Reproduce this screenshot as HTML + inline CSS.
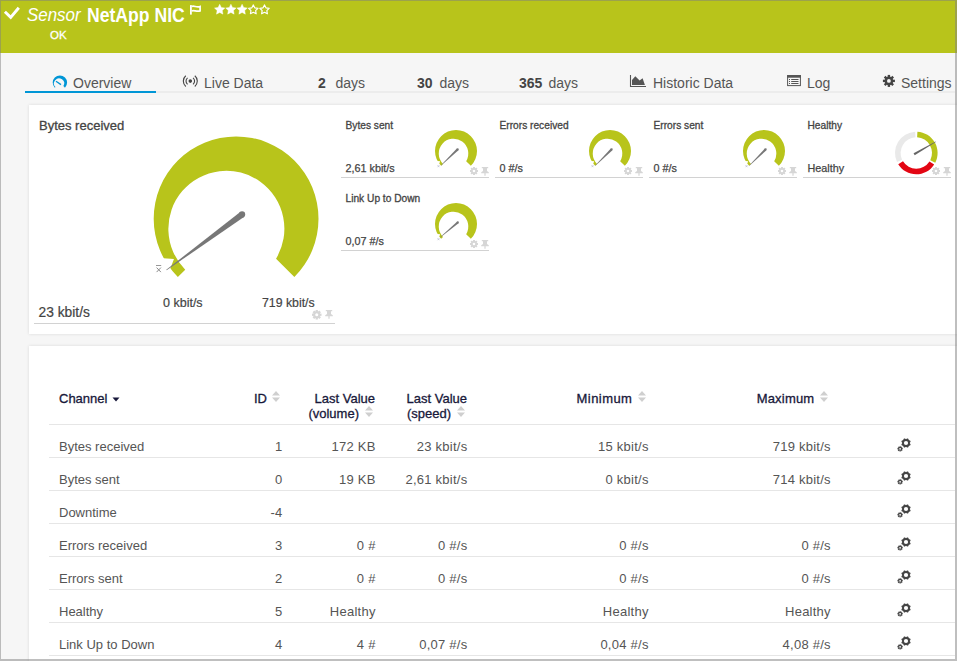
<!DOCTYPE html>
<html><head><meta charset="utf-8">
<style>
*{box-sizing:border-box}
html,body{margin:0;padding:0}
body{width:957px;height:661px;overflow:hidden;position:relative;background:#f6f6f6;font-family:"Liberation Sans",sans-serif;color:#555}
.a{position:absolute;white-space:nowrap}
svg.a{overflow:visible}
#hdr{position:absolute;left:0;top:0;width:957px;height:53px;background:#b8c41b}
.frame{position:absolute;background:rgba(128,128,128,0.5)}
.tab{position:absolute;top:75px;font-size:14px;color:#555;line-height:17px;white-space:nowrap}
.tab b{color:#444}
.panel{position:absolute;background:#fff;box-shadow:0 0 3px rgba(0,0,0,0.12)}
.ttl{position:absolute;font-size:10.2px;color:#444;-webkit-text-stroke:0.3px #444;line-height:12px;white-space:nowrap}
.val{position:absolute;font-size:10.8px;color:#444;-webkit-text-stroke:0.25px #444;line-height:12px;white-space:nowrap}
.uline{position:absolute;height:1px;background:#d2d2d2}
.th{position:absolute;font-size:13px;color:#18183a;-webkit-text-stroke:0.3px #18183a;line-height:15px;white-space:nowrap}
.td{position:absolute;font-size:13px;color:#555;line-height:15px;white-space:nowrap}
.r{text-align:right}
.rl{position:absolute;left:49px;width:906px;height:1px;background:#e6e6e6}
</style></head>
<body>
<div id="hdr"></div>
<svg class="a" style="left:0;top:0" width="24" height="24" viewBox="0 0 24 24"><path d="M4.9 11.8L10.7 17.4L18.8 7.7" fill="none" stroke="#fff" stroke-width="2.9"/></svg>
<div class="a" style="left:27px;top:4px;font-size:18px;font-style:italic;color:#fff;line-height:22px;transform:scaleX(0.94);transform-origin:0 0">Sensor</div>
<div class="a" style="left:87px;top:2.5px;font-size:19.8px;font-weight:bold;color:#fff;line-height:24px;transform:scaleX(0.89);transform-origin:0 0">NetApp NIC</div>
<div class="a" style="left:50px;top:28px;font-size:11.5px;color:#fff;-webkit-text-stroke:0.3px #fff;line-height:15px">OK</div>
<svg class="a" style="left:0;top:0" width="300" height="30" viewBox="0 0 300 30"><rect x="190" y="5.1" width="1.8" height="9.5" fill="#fff"/><path d="M191.6 6.5C194 5.3 196.5 7.7 200.1 6.5V10.9C196.5 12.1 194 9.7 191.6 10.9" fill="none" stroke="#fff" stroke-width="1.7"/><path d="M219.70 4.20L218.08 7.48L214.47 8.00L217.08 10.55L216.47 14.15L219.70 12.45L222.93 14.15L222.32 10.55L224.93 8.00L221.32 7.48Z" fill="#fff" stroke="#fff" stroke-width="0.4" stroke-linejoin="round"/><path d="M230.90 4.20L229.28 7.48L225.67 8.00L228.28 10.55L227.67 14.15L230.90 12.45L234.13 14.15L233.52 10.55L236.13 8.00L232.52 7.48Z" fill="#fff" stroke="#fff" stroke-width="0.4" stroke-linejoin="round"/><path d="M242.10 4.20L240.48 7.48L236.87 8.00L239.48 10.55L238.87 14.15L242.10 12.45L245.33 14.15L244.72 10.55L247.33 8.00L243.72 7.48Z" fill="#fff" stroke="#fff" stroke-width="0.4" stroke-linejoin="round"/><path d="M253.30 4.90L251.86 7.82L248.64 8.29L250.97 10.56L250.42 13.76L253.30 12.25L256.18 13.76L255.63 10.56L257.96 8.29L254.74 7.82Z" fill="none" stroke="#fff" stroke-width="1.2" stroke-linejoin="round"/><path d="M264.50 4.90L263.06 7.82L259.84 8.29L262.17 10.56L261.62 13.76L264.50 12.25L267.38 13.76L266.83 10.56L269.16 8.29L265.94 7.82Z" fill="none" stroke="#fff" stroke-width="1.2" stroke-linejoin="round"/></svg>
<svg class="a" style="left:0;top:60px" width="957" height="40" viewBox="0 60 957 40"><g transform="translate(59.9 82.6) scale(0.072)"><path d="M-70.71 70.71A100 100 0 1 1 70.71 70.71L48.47 48.47A70.4 70.4 0 1 0 -61.73 61.73Z" fill="#0096d6"/></g><path d="M56 81.2L61 84.6" stroke="#0096d6" stroke-width="1.3"/><circle cx="190.3" cy="81.1" r="1.8" fill="#444"/><path d="M187.54 77.81A4.3 4.3 0 0 0 187.54 84.39" fill="none" stroke="#444" stroke-width="1.1"/><path d="M193.06 77.81A4.3 4.3 0 0 1 193.06 84.39" fill="none" stroke="#444" stroke-width="1.1"/><path d="M185.80 75.74A7.0 7.0 0 0 0 185.80 86.46" fill="none" stroke="#444" stroke-width="1.1"/><path d="M194.80 75.74A7.0 7.0 0 0 1 194.80 86.46" fill="none" stroke="#444" stroke-width="1.1"/><path d="M630.5 75V86.5H646" fill="none" stroke="#555" stroke-width="1.1"/><path d="M632 85V80L635.3 76.2L639.6 80.6L642.6 78.2L644.9 85Z" fill="#555"/><rect x="787.6" y="75.6" width="12.8" height="10" fill="none" stroke="#555" stroke-width="1"/><rect x="787.1" y="75.1" width="13.8" height="2.6" fill="#555"/><rect x="789" y="79.0" width="1" height="1" fill="#555"/><rect x="791.2" y="79.0" width="7.3" height="1" fill="#555"/><rect x="789" y="81.0" width="1" height="1" fill="#555"/><rect x="791.2" y="81.0" width="7.3" height="1" fill="#555"/><rect x="789" y="83.0" width="1" height="1" fill="#555"/><rect x="791.2" y="83.0" width="7.3" height="1" fill="#555"/><g transform="translate(888.9 80.9)"><rect x="-1.2" y="-6" width="2.4" height="3" transform="rotate(0)" fill="#444"/><rect x="-1.2" y="-6" width="2.4" height="3" transform="rotate(45)" fill="#444"/><rect x="-1.2" y="-6" width="2.4" height="3" transform="rotate(90)" fill="#444"/><rect x="-1.2" y="-6" width="2.4" height="3" transform="rotate(135)" fill="#444"/><rect x="-1.2" y="-6" width="2.4" height="3" transform="rotate(180)" fill="#444"/><rect x="-1.2" y="-6" width="2.4" height="3" transform="rotate(225)" fill="#444"/><rect x="-1.2" y="-6" width="2.4" height="3" transform="rotate(270)" fill="#444"/><rect x="-1.2" y="-6" width="2.4" height="3" transform="rotate(315)" fill="#444"/><circle r="4.3" fill="#444"/><circle r="1.9" fill="#f6f6f6"/></g></svg>
<div class="uline" style="left:25px;top:91px;width:930px;height:2px;background:#ececec"></div>
<div class="uline" style="left:25px;top:91px;width:131px;height:2px;background:#0096d6"></div>
<div class="tab" style="left:73px">Overview</div>
<div class="tab" style="left:204px">Live Data</div>
<div class="tab" style="left:318px"><b>2</b></div>
<div class="tab" style="left:335.5px">days</div>
<div class="tab" style="left:417px"><b>30</b></div>
<div class="tab" style="left:439.5px">days</div>
<div class="tab" style="left:519px"><b>365</b></div>
<div class="tab" style="left:548.5px">days</div>
<div class="tab" style="left:653px">Historic Data</div>
<div class="tab" style="left:807px">Log</div>
<div class="tab" style="left:901px">Settings</div>
<div class="panel" style="left:29px;top:105px;width:940px;height:229px"></div>
<div class="panel" style="left:29px;top:346px;width:940px;height:330px"></div>
<div class="a" style="left:39px;top:118px;font-size:13px;-webkit-text-stroke:0.3px #444;color:#444;line-height:15px">Bytes received</div>
<svg class="a" style="left:140px;top:125px" width="200" height="170" viewBox="140 125 200 170"><g transform="translate(236.1 218.8) scale(0.8240)"><path d="M-70.71 70.71A100 100 0 1 1 70.71 70.71L48.47 48.47A70.4 70.4 0 1 0 -61.73 61.73Z" fill="#b8c41b"/><path d="M-88.2 47.9L-75.4 48.7L-79.8 60.2L-104 62L-104 45Z" fill="#fff"/><path d="M4.99 -8.40L-84.76 61.97L-84.35 62.54L9.50 -2.28Z" fill="#777"/><circle cx="7.25" cy="-5.34" r="3.8" fill="#777"/></g></svg>
<svg class="a" style="left:150px;top:260px" width="16" height="16" viewBox="150 260 16 16"><path d="M156 265.5H161.2" stroke="#8c8c8c" stroke-width="0.9"/><path d="M156.6 267.6L160.9 272.1M160.9 267.6L156.6 272.1" stroke="#8c8c8c" stroke-width="1"/></svg>
<div class="a" style="left:163px;top:296px;font-size:12.5px;color:#444;-webkit-text-stroke:0.2px #444;line-height:14px">0 kbit/s</div>
<div class="a" style="left:262px;top:296px;font-size:12.3px;color:#444;-webkit-text-stroke:0.2px #444;line-height:14px">719 kbit/s</div>
<div class="a" style="left:38.5px;top:305px;font-size:13.8px;color:#444;-webkit-text-stroke:0.2px #444;line-height:15px">23 kbit/s</div>
<div class="uline" style="left:34px;top:323px;width:301px"></div>
<svg class="a" style="left:312px;top:310px" width="9.5" height="9.5" viewBox="0 0 9.5 9.5"><rect x="3.61" y="0" width="2.28" height="2.85" transform="rotate(0 4.75 4.75)" fill="#d6d6d6"/><rect x="3.61" y="0" width="2.28" height="2.85" transform="rotate(45 4.75 4.75)" fill="#d6d6d6"/><rect x="3.61" y="0" width="2.28" height="2.85" transform="rotate(90 4.75 4.75)" fill="#d6d6d6"/><rect x="3.61" y="0" width="2.28" height="2.85" transform="rotate(135 4.75 4.75)" fill="#d6d6d6"/><rect x="3.61" y="0" width="2.28" height="2.85" transform="rotate(180 4.75 4.75)" fill="#d6d6d6"/><rect x="3.61" y="0" width="2.28" height="2.85" transform="rotate(225 4.75 4.75)" fill="#d6d6d6"/><rect x="3.61" y="0" width="2.28" height="2.85" transform="rotate(270 4.75 4.75)" fill="#d6d6d6"/><rect x="3.61" y="0" width="2.28" height="2.85" transform="rotate(315 4.75 4.75)" fill="#d6d6d6"/><circle cx="4.75" cy="4.75" r="3.42" fill="#d6d6d6"/><circle cx="4.75" cy="4.75" r="1.52" fill="#fff"/></svg><svg class="a" style="left:325px;top:309.5px" width="8" height="10" viewBox="0 0 8 10"><path d="M0.8 0H7.2V1.3H6V3.9L7.8 5.2V6.2H4.6V8.8H3.4V6.2H0.2V5.2L2 3.9V1.3H0.8Z" fill="#d6d6d6"/></svg>
<div class="ttl" style="left:345.5px;top:119.5px">Bytes sent</div><div class="val" style="left:345.5px;top:162px">2,61 kbit/s</div><div class="uline" style="left:341px;top:177px;width:148px"></div><svg class="a" style="left:426px;top:120px" width="60" height="60" viewBox="426 120 60 60"><g transform="translate(456 151) scale(0.2100)"><path d="M-70.71 70.71A100 100 0 1 1 70.71 70.71L48.47 48.47A70.4 70.4 0 1 0 -61.73 61.73Z" fill="#b8c41b"/><path d="M-88.2 47.9L-75.4 48.7L-79.8 60.2L-104 62L-104 45Z" fill="#fff"/><path d="M4.16 -11.53L-71.82 68.14L-70.57 69.43L11.66 -3.76Z" fill="#777"/><circle cx="7.91" cy="-7.64" r="5.4" fill="#777"/></g></svg><svg class="a" style="left:436px;top:163px" width="6" height="6" viewBox="0 0 6 6"><path d="M1.6 2.2L3.4 4.2M3.4 2.2L1.6 4.2" stroke="#b4b8d0" stroke-width="0.7"/></svg><svg class="a" style="left:470px;top:167px" width="8" height="8" viewBox="0 0 8 8"><rect x="3.04" y="0" width="1.92" height="2.40" transform="rotate(0 4.0 4.0)" fill="#d6d6d6"/><rect x="3.04" y="0" width="1.92" height="2.40" transform="rotate(45 4.0 4.0)" fill="#d6d6d6"/><rect x="3.04" y="0" width="1.92" height="2.40" transform="rotate(90 4.0 4.0)" fill="#d6d6d6"/><rect x="3.04" y="0" width="1.92" height="2.40" transform="rotate(135 4.0 4.0)" fill="#d6d6d6"/><rect x="3.04" y="0" width="1.92" height="2.40" transform="rotate(180 4.0 4.0)" fill="#d6d6d6"/><rect x="3.04" y="0" width="1.92" height="2.40" transform="rotate(225 4.0 4.0)" fill="#d6d6d6"/><rect x="3.04" y="0" width="1.92" height="2.40" transform="rotate(270 4.0 4.0)" fill="#d6d6d6"/><rect x="3.04" y="0" width="1.92" height="2.40" transform="rotate(315 4.0 4.0)" fill="#d6d6d6"/><circle cx="4.0" cy="4.0" r="2.88" fill="#d6d6d6"/><circle cx="4.0" cy="4.0" r="1.28" fill="#fff"/></svg><svg class="a" style="left:480.8px;top:167px" width="8" height="10" viewBox="0 0 8 10"><path d="M0.8 0H7.2V1.3H6V3.9L7.8 5.2V6.2H4.6V8.8H3.4V6.2H0.2V5.2L2 3.9V1.3H0.8Z" fill="#d6d6d6"/></svg>
<div class="ttl" style="left:499.5px;top:119.5px">Errors received</div><div class="val" style="left:499.5px;top:162px">0 #/s</div><div class="uline" style="left:495px;top:177px;width:148px"></div><svg class="a" style="left:580px;top:120px" width="60" height="60" viewBox="580 120 60 60"><g transform="translate(610 151) scale(0.2100)"><path d="M-70.71 70.71A100 100 0 1 1 70.71 70.71L48.47 48.47A70.4 70.4 0 1 0 -61.73 61.73Z" fill="#b8c41b"/><path d="M-88.2 47.9L-75.4 48.7L-79.8 60.2L-104 62L-104 45Z" fill="#fff"/><path d="M3.96 -11.60L-70.64 69.37L-69.37 70.64L11.60 -3.96Z" fill="#777"/><circle cx="7.78" cy="-7.78" r="5.4" fill="#777"/></g></svg><svg class="a" style="left:590px;top:163px" width="6" height="6" viewBox="0 0 6 6"><path d="M1.6 2.2L3.4 4.2M3.4 2.2L1.6 4.2" stroke="#b4b8d0" stroke-width="0.7"/></svg><svg class="a" style="left:624px;top:167px" width="8" height="8" viewBox="0 0 8 8"><rect x="3.04" y="0" width="1.92" height="2.40" transform="rotate(0 4.0 4.0)" fill="#d6d6d6"/><rect x="3.04" y="0" width="1.92" height="2.40" transform="rotate(45 4.0 4.0)" fill="#d6d6d6"/><rect x="3.04" y="0" width="1.92" height="2.40" transform="rotate(90 4.0 4.0)" fill="#d6d6d6"/><rect x="3.04" y="0" width="1.92" height="2.40" transform="rotate(135 4.0 4.0)" fill="#d6d6d6"/><rect x="3.04" y="0" width="1.92" height="2.40" transform="rotate(180 4.0 4.0)" fill="#d6d6d6"/><rect x="3.04" y="0" width="1.92" height="2.40" transform="rotate(225 4.0 4.0)" fill="#d6d6d6"/><rect x="3.04" y="0" width="1.92" height="2.40" transform="rotate(270 4.0 4.0)" fill="#d6d6d6"/><rect x="3.04" y="0" width="1.92" height="2.40" transform="rotate(315 4.0 4.0)" fill="#d6d6d6"/><circle cx="4.0" cy="4.0" r="2.88" fill="#d6d6d6"/><circle cx="4.0" cy="4.0" r="1.28" fill="#fff"/></svg><svg class="a" style="left:634.8px;top:167px" width="8" height="10" viewBox="0 0 8 10"><path d="M0.8 0H7.2V1.3H6V3.9L7.8 5.2V6.2H4.6V8.8H3.4V6.2H0.2V5.2L2 3.9V1.3H0.8Z" fill="#d6d6d6"/></svg>
<div class="ttl" style="left:653.5px;top:119.5px">Errors sent</div><div class="val" style="left:653.5px;top:162px">0 #/s</div><div class="uline" style="left:649px;top:177px;width:148px"></div><svg class="a" style="left:734px;top:120px" width="60" height="60" viewBox="734 120 60 60"><g transform="translate(764 151) scale(0.2100)"><path d="M-70.71 70.71A100 100 0 1 1 70.71 70.71L48.47 48.47A70.4 70.4 0 1 0 -61.73 61.73Z" fill="#b8c41b"/><path d="M-88.2 47.9L-75.4 48.7L-79.8 60.2L-104 62L-104 45Z" fill="#fff"/><path d="M3.96 -11.60L-70.64 69.37L-69.37 70.64L11.60 -3.96Z" fill="#777"/><circle cx="7.78" cy="-7.78" r="5.4" fill="#777"/></g></svg><svg class="a" style="left:744px;top:163px" width="6" height="6" viewBox="0 0 6 6"><path d="M1.6 2.2L3.4 4.2M3.4 2.2L1.6 4.2" stroke="#b4b8d0" stroke-width="0.7"/></svg><svg class="a" style="left:778px;top:167px" width="8" height="8" viewBox="0 0 8 8"><rect x="3.04" y="0" width="1.92" height="2.40" transform="rotate(0 4.0 4.0)" fill="#d6d6d6"/><rect x="3.04" y="0" width="1.92" height="2.40" transform="rotate(45 4.0 4.0)" fill="#d6d6d6"/><rect x="3.04" y="0" width="1.92" height="2.40" transform="rotate(90 4.0 4.0)" fill="#d6d6d6"/><rect x="3.04" y="0" width="1.92" height="2.40" transform="rotate(135 4.0 4.0)" fill="#d6d6d6"/><rect x="3.04" y="0" width="1.92" height="2.40" transform="rotate(180 4.0 4.0)" fill="#d6d6d6"/><rect x="3.04" y="0" width="1.92" height="2.40" transform="rotate(225 4.0 4.0)" fill="#d6d6d6"/><rect x="3.04" y="0" width="1.92" height="2.40" transform="rotate(270 4.0 4.0)" fill="#d6d6d6"/><rect x="3.04" y="0" width="1.92" height="2.40" transform="rotate(315 4.0 4.0)" fill="#d6d6d6"/><circle cx="4.0" cy="4.0" r="2.88" fill="#d6d6d6"/><circle cx="4.0" cy="4.0" r="1.28" fill="#fff"/></svg><svg class="a" style="left:788.8px;top:167px" width="8" height="10" viewBox="0 0 8 10"><path d="M0.8 0H7.2V1.3H6V3.9L7.8 5.2V6.2H4.6V8.8H3.4V6.2H0.2V5.2L2 3.9V1.3H0.8Z" fill="#d6d6d6"/></svg>
<div class="ttl" style="left:807.5px;top:119.5px">Healthy</div><div class="val" style="left:807.5px;top:162px">Healthy</div><div class="uline" style="left:803px;top:177px;width:148px"></div><svg class="a" style="left:893px;top:125px" width="58" height="60" viewBox="893 125 58 60"><g transform="translate(916.3 153)"><path d="M-19.30 9.00A21.3 21.3 0 0 1 -1.11 -21.27L-0.82 -15.68A15.7 15.7 0 0 0 -14.23 6.64Z" fill="#e9e9e9"/><path d="M1.11 -21.27A21.3 21.3 0 0 1 18.98 9.67L13.99 7.13A15.7 15.7 0 0 0 0.82 -15.68Z" fill="#b8c41b"/><path d="M17.86 11.60A21.3 21.3 0 0 1 -18.06 11.29L-13.31 8.32A15.7 15.7 0 0 0 13.17 8.55Z" fill="#e30613"/><path d="M-1.62 2.20L19.59 -11.08L19.39 -11.42L-2.72 0.30Z" fill="#666"/></g></svg><svg class="a" style="left:932px;top:167px" width="8" height="8" viewBox="0 0 8 8"><rect x="3.04" y="0" width="1.92" height="2.40" transform="rotate(0 4.0 4.0)" fill="#d6d6d6"/><rect x="3.04" y="0" width="1.92" height="2.40" transform="rotate(45 4.0 4.0)" fill="#d6d6d6"/><rect x="3.04" y="0" width="1.92" height="2.40" transform="rotate(90 4.0 4.0)" fill="#d6d6d6"/><rect x="3.04" y="0" width="1.92" height="2.40" transform="rotate(135 4.0 4.0)" fill="#d6d6d6"/><rect x="3.04" y="0" width="1.92" height="2.40" transform="rotate(180 4.0 4.0)" fill="#d6d6d6"/><rect x="3.04" y="0" width="1.92" height="2.40" transform="rotate(225 4.0 4.0)" fill="#d6d6d6"/><rect x="3.04" y="0" width="1.92" height="2.40" transform="rotate(270 4.0 4.0)" fill="#d6d6d6"/><rect x="3.04" y="0" width="1.92" height="2.40" transform="rotate(315 4.0 4.0)" fill="#d6d6d6"/><circle cx="4.0" cy="4.0" r="2.88" fill="#d6d6d6"/><circle cx="4.0" cy="4.0" r="1.28" fill="#fff"/></svg><svg class="a" style="left:942.8px;top:167px" width="8" height="10" viewBox="0 0 8 10"><path d="M0.8 0H7.2V1.3H6V3.9L7.8 5.2V6.2H4.6V8.8H3.4V6.2H0.2V5.2L2 3.9V1.3H0.8Z" fill="#d6d6d6"/></svg>
<div class="ttl" style="left:345.5px;top:192.5px">Link Up to Down</div><div class="val" style="left:345.5px;top:235px">0,07 #/s</div><div class="uline" style="left:341px;top:250px;width:148px"></div><svg class="a" style="left:426px;top:193px" width="60" height="60" viewBox="426 193 60 60"><g transform="translate(456 224) scale(0.2100)"><path d="M-70.71 70.71A100 100 0 1 1 70.71 70.71L48.47 48.47A70.4 70.4 0 1 0 -61.73 61.73Z" fill="#b8c41b"/><path d="M-88.2 47.9L-75.4 48.7L-79.8 60.2L-104 62L-104 45Z" fill="#fff"/><path d="M4.88 -11.24L-76.01 63.44L-74.85 64.81L11.88 -3.01Z" fill="#777"/><circle cx="8.38" cy="-7.12" r="5.4" fill="#777"/></g></svg><svg class="a" style="left:436px;top:236px" width="6" height="6" viewBox="0 0 6 6"><path d="M1.6 2.2L3.4 4.2M3.4 2.2L1.6 4.2" stroke="#b4b8d0" stroke-width="0.7"/></svg><svg class="a" style="left:470px;top:240px" width="8" height="8" viewBox="0 0 8 8"><rect x="3.04" y="0" width="1.92" height="2.40" transform="rotate(0 4.0 4.0)" fill="#d6d6d6"/><rect x="3.04" y="0" width="1.92" height="2.40" transform="rotate(45 4.0 4.0)" fill="#d6d6d6"/><rect x="3.04" y="0" width="1.92" height="2.40" transform="rotate(90 4.0 4.0)" fill="#d6d6d6"/><rect x="3.04" y="0" width="1.92" height="2.40" transform="rotate(135 4.0 4.0)" fill="#d6d6d6"/><rect x="3.04" y="0" width="1.92" height="2.40" transform="rotate(180 4.0 4.0)" fill="#d6d6d6"/><rect x="3.04" y="0" width="1.92" height="2.40" transform="rotate(225 4.0 4.0)" fill="#d6d6d6"/><rect x="3.04" y="0" width="1.92" height="2.40" transform="rotate(270 4.0 4.0)" fill="#d6d6d6"/><rect x="3.04" y="0" width="1.92" height="2.40" transform="rotate(315 4.0 4.0)" fill="#d6d6d6"/><circle cx="4.0" cy="4.0" r="2.88" fill="#d6d6d6"/><circle cx="4.0" cy="4.0" r="1.28" fill="#fff"/></svg><svg class="a" style="left:480.8px;top:240px" width="8" height="10" viewBox="0 0 8 10"><path d="M0.8 0H7.2V1.3H6V3.9L7.8 5.2V6.2H4.6V8.8H3.4V6.2H0.2V5.2L2 3.9V1.3H0.8Z" fill="#d6d6d6"/></svg>
<div class="th" style="left:59px;top:391px">Channel</div>
<svg class="a" style="left:112px;top:397px" width="8" height="5" viewBox="0 0 8 5"><path d="M0.5 0.5H7.5L4 4.5Z" fill="#18183a"/></svg>
<div class="th r" style="left:200px;width:67px;top:391px">ID</div>
<svg class="a" style="left:272px;top:391px" width="8" height="11" viewBox="0 0 8 11"><path d="M0 4.5L4 0L8 4.5Z M0 6.5L4 11L8 6.5Z" fill="#cfcfcf"/></svg>
<div class="th r" style="left:290px;width:85px;top:391px">Last Value</div>
<div class="th r" style="left:290px;width:69px;top:406px">(volume)</div>
<svg class="a" style="left:365px;top:406px" width="8" height="11" viewBox="0 0 8 11"><path d="M0 4.5L4 0L8 4.5Z M0 6.5L4 11L8 6.5Z" fill="#cfcfcf"/></svg>
<div class="th r" style="left:380px;width:87px;top:391px">Last Value</div>
<div class="th r" style="left:380px;width:71px;top:406px">(speed)</div>
<svg class="a" style="left:457px;top:406px" width="8" height="11" viewBox="0 0 8 11"><path d="M0 4.5L4 0L8 4.5Z M0 6.5L4 11L8 6.5Z" fill="#cfcfcf"/></svg>
<div class="th r" style="left:540px;width:92.4px;top:391px;letter-spacing:0.45px">Minimum</div>
<svg class="a" style="left:638px;top:391px" width="8" height="11" viewBox="0 0 8 11"><path d="M0 4.5L4 0L8 4.5Z M0 6.5L4 11L8 6.5Z" fill="#cfcfcf"/></svg>
<div class="th r" style="left:720px;width:94.4px;top:391px;letter-spacing:0.2px">Maximum</div>
<svg class="a" style="left:820px;top:391px" width="8" height="11" viewBox="0 0 8 11"><path d="M0 4.5L4 0L8 4.5Z M0 6.5L4 11L8 6.5Z" fill="#cfcfcf"/></svg>
<div class="rl" style="top:424px"></div>
<div class="rl" style="top:457px"></div>
<div class="rl" style="top:490px"></div>
<div class="rl" style="top:523px"></div>
<div class="rl" style="top:556px"></div>
<div class="rl" style="top:589px"></div>
<div class="rl" style="top:622px"></div>
<div class="rl" style="top:655px"></div>
<div class="td" style="left:59px;top:439px">Bytes received</div>
<div class="td r" style="left:162.45px;width:120px;top:439px;letter-spacing:0.25px">1</div>
<div class="td r" style="left:255.64999999999998px;width:120px;top:439px;letter-spacing:0.25px">172 KB</div>
<div class="td r" style="left:347.45px;width:120px;top:439px;letter-spacing:0.25px">23 kbit/s</div>
<div class="td r" style="left:528.65px;width:120px;top:439px;letter-spacing:0.25px">15 kbit/s</div>
<div class="td r" style="left:710.85px;width:120px;top:439px;letter-spacing:0.25px">719 kbit/s</div>
<svg class="a" style="left:895.8px;top:436.5px" width="16" height="16" viewBox="-10 -6 16 16"><rect x="-0.9" y="-4.7" width="1.8" height="1.5" transform="rotate(22.5)" fill="#444"/><rect x="-0.9" y="-4.7" width="1.8" height="1.5" transform="rotate(67.5)" fill="#444"/><rect x="-0.9" y="-4.7" width="1.8" height="1.5" transform="rotate(112.5)" fill="#444"/><rect x="-0.9" y="-4.7" width="1.8" height="1.5" transform="rotate(157.5)" fill="#444"/><rect x="-0.9" y="-4.7" width="1.8" height="1.5" transform="rotate(202.5)" fill="#444"/><rect x="-0.9" y="-4.7" width="1.8" height="1.5" transform="rotate(247.5)" fill="#444"/><rect x="-0.9" y="-4.7" width="1.8" height="1.5" transform="rotate(292.5)" fill="#444"/><rect x="-0.9" y="-4.7" width="1.8" height="1.5" transform="rotate(337.5)" fill="#444"/><circle r="4.0" fill="#444"/><circle r="2.1" fill="#fff"/><g transform="translate(-5.9 5.8)"><rect x="-0.5" y="-2.85" width="1" height="1" transform="rotate(0)" fill="#444"/><rect x="-0.5" y="-2.85" width="1" height="1" transform="rotate(45)" fill="#444"/><rect x="-0.5" y="-2.85" width="1" height="1" transform="rotate(90)" fill="#444"/><rect x="-0.5" y="-2.85" width="1" height="1" transform="rotate(135)" fill="#444"/><rect x="-0.5" y="-2.85" width="1" height="1" transform="rotate(180)" fill="#444"/><rect x="-0.5" y="-2.85" width="1" height="1" transform="rotate(225)" fill="#444"/><rect x="-0.5" y="-2.85" width="1" height="1" transform="rotate(270)" fill="#444"/><rect x="-0.5" y="-2.85" width="1" height="1" transform="rotate(315)" fill="#444"/><circle r="2.15" fill="#444"/><circle r="0.9" fill="#fff"/></g></svg>
<div class="td" style="left:59px;top:472px">Bytes sent</div>
<div class="td r" style="left:162.45px;width:120px;top:472px;letter-spacing:0.25px">0</div>
<div class="td r" style="left:255.64999999999998px;width:120px;top:472px;letter-spacing:0.25px">19 KB</div>
<div class="td r" style="left:347.45px;width:120px;top:472px;letter-spacing:0.25px">2,61 kbit/s</div>
<div class="td r" style="left:528.65px;width:120px;top:472px;letter-spacing:0.25px">0 kbit/s</div>
<div class="td r" style="left:710.85px;width:120px;top:472px;letter-spacing:0.25px">714 kbit/s</div>
<svg class="a" style="left:895.8px;top:469.5px" width="16" height="16" viewBox="-10 -6 16 16"><rect x="-0.9" y="-4.7" width="1.8" height="1.5" transform="rotate(22.5)" fill="#444"/><rect x="-0.9" y="-4.7" width="1.8" height="1.5" transform="rotate(67.5)" fill="#444"/><rect x="-0.9" y="-4.7" width="1.8" height="1.5" transform="rotate(112.5)" fill="#444"/><rect x="-0.9" y="-4.7" width="1.8" height="1.5" transform="rotate(157.5)" fill="#444"/><rect x="-0.9" y="-4.7" width="1.8" height="1.5" transform="rotate(202.5)" fill="#444"/><rect x="-0.9" y="-4.7" width="1.8" height="1.5" transform="rotate(247.5)" fill="#444"/><rect x="-0.9" y="-4.7" width="1.8" height="1.5" transform="rotate(292.5)" fill="#444"/><rect x="-0.9" y="-4.7" width="1.8" height="1.5" transform="rotate(337.5)" fill="#444"/><circle r="4.0" fill="#444"/><circle r="2.1" fill="#fff"/><g transform="translate(-5.9 5.8)"><rect x="-0.5" y="-2.85" width="1" height="1" transform="rotate(0)" fill="#444"/><rect x="-0.5" y="-2.85" width="1" height="1" transform="rotate(45)" fill="#444"/><rect x="-0.5" y="-2.85" width="1" height="1" transform="rotate(90)" fill="#444"/><rect x="-0.5" y="-2.85" width="1" height="1" transform="rotate(135)" fill="#444"/><rect x="-0.5" y="-2.85" width="1" height="1" transform="rotate(180)" fill="#444"/><rect x="-0.5" y="-2.85" width="1" height="1" transform="rotate(225)" fill="#444"/><rect x="-0.5" y="-2.85" width="1" height="1" transform="rotate(270)" fill="#444"/><rect x="-0.5" y="-2.85" width="1" height="1" transform="rotate(315)" fill="#444"/><circle r="2.15" fill="#444"/><circle r="0.9" fill="#fff"/></g></svg>
<div class="td" style="left:59px;top:505px">Downtime</div>
<div class="td r" style="left:162.45px;width:120px;top:505px;letter-spacing:0.25px">-4</div>
<svg class="a" style="left:895.8px;top:502.5px" width="16" height="16" viewBox="-10 -6 16 16"><rect x="-0.9" y="-4.7" width="1.8" height="1.5" transform="rotate(22.5)" fill="#444"/><rect x="-0.9" y="-4.7" width="1.8" height="1.5" transform="rotate(67.5)" fill="#444"/><rect x="-0.9" y="-4.7" width="1.8" height="1.5" transform="rotate(112.5)" fill="#444"/><rect x="-0.9" y="-4.7" width="1.8" height="1.5" transform="rotate(157.5)" fill="#444"/><rect x="-0.9" y="-4.7" width="1.8" height="1.5" transform="rotate(202.5)" fill="#444"/><rect x="-0.9" y="-4.7" width="1.8" height="1.5" transform="rotate(247.5)" fill="#444"/><rect x="-0.9" y="-4.7" width="1.8" height="1.5" transform="rotate(292.5)" fill="#444"/><rect x="-0.9" y="-4.7" width="1.8" height="1.5" transform="rotate(337.5)" fill="#444"/><circle r="4.0" fill="#444"/><circle r="2.1" fill="#fff"/><g transform="translate(-5.9 5.8)"><rect x="-0.5" y="-2.85" width="1" height="1" transform="rotate(0)" fill="#444"/><rect x="-0.5" y="-2.85" width="1" height="1" transform="rotate(45)" fill="#444"/><rect x="-0.5" y="-2.85" width="1" height="1" transform="rotate(90)" fill="#444"/><rect x="-0.5" y="-2.85" width="1" height="1" transform="rotate(135)" fill="#444"/><rect x="-0.5" y="-2.85" width="1" height="1" transform="rotate(180)" fill="#444"/><rect x="-0.5" y="-2.85" width="1" height="1" transform="rotate(225)" fill="#444"/><rect x="-0.5" y="-2.85" width="1" height="1" transform="rotate(270)" fill="#444"/><rect x="-0.5" y="-2.85" width="1" height="1" transform="rotate(315)" fill="#444"/><circle r="2.15" fill="#444"/><circle r="0.9" fill="#fff"/></g></svg>
<div class="td" style="left:59px;top:538px">Errors received</div>
<div class="td r" style="left:162.45px;width:120px;top:538px;letter-spacing:0.25px">3</div>
<div class="td r" style="left:255.64999999999998px;width:120px;top:538px;letter-spacing:0.25px">0 #</div>
<div class="td r" style="left:347.45px;width:120px;top:538px;letter-spacing:0.25px">0 #/s</div>
<div class="td r" style="left:528.65px;width:120px;top:538px;letter-spacing:0.25px">0 #/s</div>
<div class="td r" style="left:710.85px;width:120px;top:538px;letter-spacing:0.25px">0 #/s</div>
<svg class="a" style="left:895.8px;top:535.5px" width="16" height="16" viewBox="-10 -6 16 16"><rect x="-0.9" y="-4.7" width="1.8" height="1.5" transform="rotate(22.5)" fill="#444"/><rect x="-0.9" y="-4.7" width="1.8" height="1.5" transform="rotate(67.5)" fill="#444"/><rect x="-0.9" y="-4.7" width="1.8" height="1.5" transform="rotate(112.5)" fill="#444"/><rect x="-0.9" y="-4.7" width="1.8" height="1.5" transform="rotate(157.5)" fill="#444"/><rect x="-0.9" y="-4.7" width="1.8" height="1.5" transform="rotate(202.5)" fill="#444"/><rect x="-0.9" y="-4.7" width="1.8" height="1.5" transform="rotate(247.5)" fill="#444"/><rect x="-0.9" y="-4.7" width="1.8" height="1.5" transform="rotate(292.5)" fill="#444"/><rect x="-0.9" y="-4.7" width="1.8" height="1.5" transform="rotate(337.5)" fill="#444"/><circle r="4.0" fill="#444"/><circle r="2.1" fill="#fff"/><g transform="translate(-5.9 5.8)"><rect x="-0.5" y="-2.85" width="1" height="1" transform="rotate(0)" fill="#444"/><rect x="-0.5" y="-2.85" width="1" height="1" transform="rotate(45)" fill="#444"/><rect x="-0.5" y="-2.85" width="1" height="1" transform="rotate(90)" fill="#444"/><rect x="-0.5" y="-2.85" width="1" height="1" transform="rotate(135)" fill="#444"/><rect x="-0.5" y="-2.85" width="1" height="1" transform="rotate(180)" fill="#444"/><rect x="-0.5" y="-2.85" width="1" height="1" transform="rotate(225)" fill="#444"/><rect x="-0.5" y="-2.85" width="1" height="1" transform="rotate(270)" fill="#444"/><rect x="-0.5" y="-2.85" width="1" height="1" transform="rotate(315)" fill="#444"/><circle r="2.15" fill="#444"/><circle r="0.9" fill="#fff"/></g></svg>
<div class="td" style="left:59px;top:571px">Errors sent</div>
<div class="td r" style="left:162.45px;width:120px;top:571px;letter-spacing:0.25px">2</div>
<div class="td r" style="left:255.64999999999998px;width:120px;top:571px;letter-spacing:0.25px">0 #</div>
<div class="td r" style="left:347.45px;width:120px;top:571px;letter-spacing:0.25px">0 #/s</div>
<div class="td r" style="left:528.65px;width:120px;top:571px;letter-spacing:0.25px">0 #/s</div>
<div class="td r" style="left:710.85px;width:120px;top:571px;letter-spacing:0.25px">0 #/s</div>
<svg class="a" style="left:895.8px;top:568.5px" width="16" height="16" viewBox="-10 -6 16 16"><rect x="-0.9" y="-4.7" width="1.8" height="1.5" transform="rotate(22.5)" fill="#444"/><rect x="-0.9" y="-4.7" width="1.8" height="1.5" transform="rotate(67.5)" fill="#444"/><rect x="-0.9" y="-4.7" width="1.8" height="1.5" transform="rotate(112.5)" fill="#444"/><rect x="-0.9" y="-4.7" width="1.8" height="1.5" transform="rotate(157.5)" fill="#444"/><rect x="-0.9" y="-4.7" width="1.8" height="1.5" transform="rotate(202.5)" fill="#444"/><rect x="-0.9" y="-4.7" width="1.8" height="1.5" transform="rotate(247.5)" fill="#444"/><rect x="-0.9" y="-4.7" width="1.8" height="1.5" transform="rotate(292.5)" fill="#444"/><rect x="-0.9" y="-4.7" width="1.8" height="1.5" transform="rotate(337.5)" fill="#444"/><circle r="4.0" fill="#444"/><circle r="2.1" fill="#fff"/><g transform="translate(-5.9 5.8)"><rect x="-0.5" y="-2.85" width="1" height="1" transform="rotate(0)" fill="#444"/><rect x="-0.5" y="-2.85" width="1" height="1" transform="rotate(45)" fill="#444"/><rect x="-0.5" y="-2.85" width="1" height="1" transform="rotate(90)" fill="#444"/><rect x="-0.5" y="-2.85" width="1" height="1" transform="rotate(135)" fill="#444"/><rect x="-0.5" y="-2.85" width="1" height="1" transform="rotate(180)" fill="#444"/><rect x="-0.5" y="-2.85" width="1" height="1" transform="rotate(225)" fill="#444"/><rect x="-0.5" y="-2.85" width="1" height="1" transform="rotate(270)" fill="#444"/><rect x="-0.5" y="-2.85" width="1" height="1" transform="rotate(315)" fill="#444"/><circle r="2.15" fill="#444"/><circle r="0.9" fill="#fff"/></g></svg>
<div class="td" style="left:59px;top:604px">Healthy</div>
<div class="td r" style="left:162.45px;width:120px;top:604px;letter-spacing:0.25px">5</div>
<div class="td r" style="left:255.64999999999998px;width:120px;top:604px;letter-spacing:0.25px">Healthy</div>
<div class="td r" style="left:528.65px;width:120px;top:604px;letter-spacing:0.25px">Healthy</div>
<div class="td r" style="left:710.85px;width:120px;top:604px;letter-spacing:0.25px">Healthy</div>
<svg class="a" style="left:895.8px;top:601.5px" width="16" height="16" viewBox="-10 -6 16 16"><rect x="-0.9" y="-4.7" width="1.8" height="1.5" transform="rotate(22.5)" fill="#444"/><rect x="-0.9" y="-4.7" width="1.8" height="1.5" transform="rotate(67.5)" fill="#444"/><rect x="-0.9" y="-4.7" width="1.8" height="1.5" transform="rotate(112.5)" fill="#444"/><rect x="-0.9" y="-4.7" width="1.8" height="1.5" transform="rotate(157.5)" fill="#444"/><rect x="-0.9" y="-4.7" width="1.8" height="1.5" transform="rotate(202.5)" fill="#444"/><rect x="-0.9" y="-4.7" width="1.8" height="1.5" transform="rotate(247.5)" fill="#444"/><rect x="-0.9" y="-4.7" width="1.8" height="1.5" transform="rotate(292.5)" fill="#444"/><rect x="-0.9" y="-4.7" width="1.8" height="1.5" transform="rotate(337.5)" fill="#444"/><circle r="4.0" fill="#444"/><circle r="2.1" fill="#fff"/><g transform="translate(-5.9 5.8)"><rect x="-0.5" y="-2.85" width="1" height="1" transform="rotate(0)" fill="#444"/><rect x="-0.5" y="-2.85" width="1" height="1" transform="rotate(45)" fill="#444"/><rect x="-0.5" y="-2.85" width="1" height="1" transform="rotate(90)" fill="#444"/><rect x="-0.5" y="-2.85" width="1" height="1" transform="rotate(135)" fill="#444"/><rect x="-0.5" y="-2.85" width="1" height="1" transform="rotate(180)" fill="#444"/><rect x="-0.5" y="-2.85" width="1" height="1" transform="rotate(225)" fill="#444"/><rect x="-0.5" y="-2.85" width="1" height="1" transform="rotate(270)" fill="#444"/><rect x="-0.5" y="-2.85" width="1" height="1" transform="rotate(315)" fill="#444"/><circle r="2.15" fill="#444"/><circle r="0.9" fill="#fff"/></g></svg>
<div class="td" style="left:59px;top:637px">Link Up to Down</div>
<div class="td r" style="left:162.45px;width:120px;top:637px;letter-spacing:0.25px">4</div>
<div class="td r" style="left:255.64999999999998px;width:120px;top:637px;letter-spacing:0.25px">4 #</div>
<div class="td r" style="left:347.45px;width:120px;top:637px;letter-spacing:0.25px">0,07 #/s</div>
<div class="td r" style="left:528.65px;width:120px;top:637px;letter-spacing:0.25px">0,04 #/s</div>
<div class="td r" style="left:710.85px;width:120px;top:637px;letter-spacing:0.25px">4,08 #/s</div>
<svg class="a" style="left:895.8px;top:634.5px" width="16" height="16" viewBox="-10 -6 16 16"><rect x="-0.9" y="-4.7" width="1.8" height="1.5" transform="rotate(22.5)" fill="#444"/><rect x="-0.9" y="-4.7" width="1.8" height="1.5" transform="rotate(67.5)" fill="#444"/><rect x="-0.9" y="-4.7" width="1.8" height="1.5" transform="rotate(112.5)" fill="#444"/><rect x="-0.9" y="-4.7" width="1.8" height="1.5" transform="rotate(157.5)" fill="#444"/><rect x="-0.9" y="-4.7" width="1.8" height="1.5" transform="rotate(202.5)" fill="#444"/><rect x="-0.9" y="-4.7" width="1.8" height="1.5" transform="rotate(247.5)" fill="#444"/><rect x="-0.9" y="-4.7" width="1.8" height="1.5" transform="rotate(292.5)" fill="#444"/><rect x="-0.9" y="-4.7" width="1.8" height="1.5" transform="rotate(337.5)" fill="#444"/><circle r="4.0" fill="#444"/><circle r="2.1" fill="#fff"/><g transform="translate(-5.9 5.8)"><rect x="-0.5" y="-2.85" width="1" height="1" transform="rotate(0)" fill="#444"/><rect x="-0.5" y="-2.85" width="1" height="1" transform="rotate(45)" fill="#444"/><rect x="-0.5" y="-2.85" width="1" height="1" transform="rotate(90)" fill="#444"/><rect x="-0.5" y="-2.85" width="1" height="1" transform="rotate(135)" fill="#444"/><rect x="-0.5" y="-2.85" width="1" height="1" transform="rotate(180)" fill="#444"/><rect x="-0.5" y="-2.85" width="1" height="1" transform="rotate(225)" fill="#444"/><rect x="-0.5" y="-2.85" width="1" height="1" transform="rotate(270)" fill="#444"/><rect x="-0.5" y="-2.85" width="1" height="1" transform="rotate(315)" fill="#444"/><circle r="2.15" fill="#444"/><circle r="0.9" fill="#fff"/></g></svg>
<div class="frame" style="left:0;top:0;width:957px;height:1px"></div>
<div class="frame" style="left:0;top:1px;width:1px;height:658px"></div>
<div class="frame" style="left:955px;top:1px;width:2px;height:660px"></div>
<div class="frame" style="left:0;top:659px;width:955px;height:2px"></div>
</body></html>
